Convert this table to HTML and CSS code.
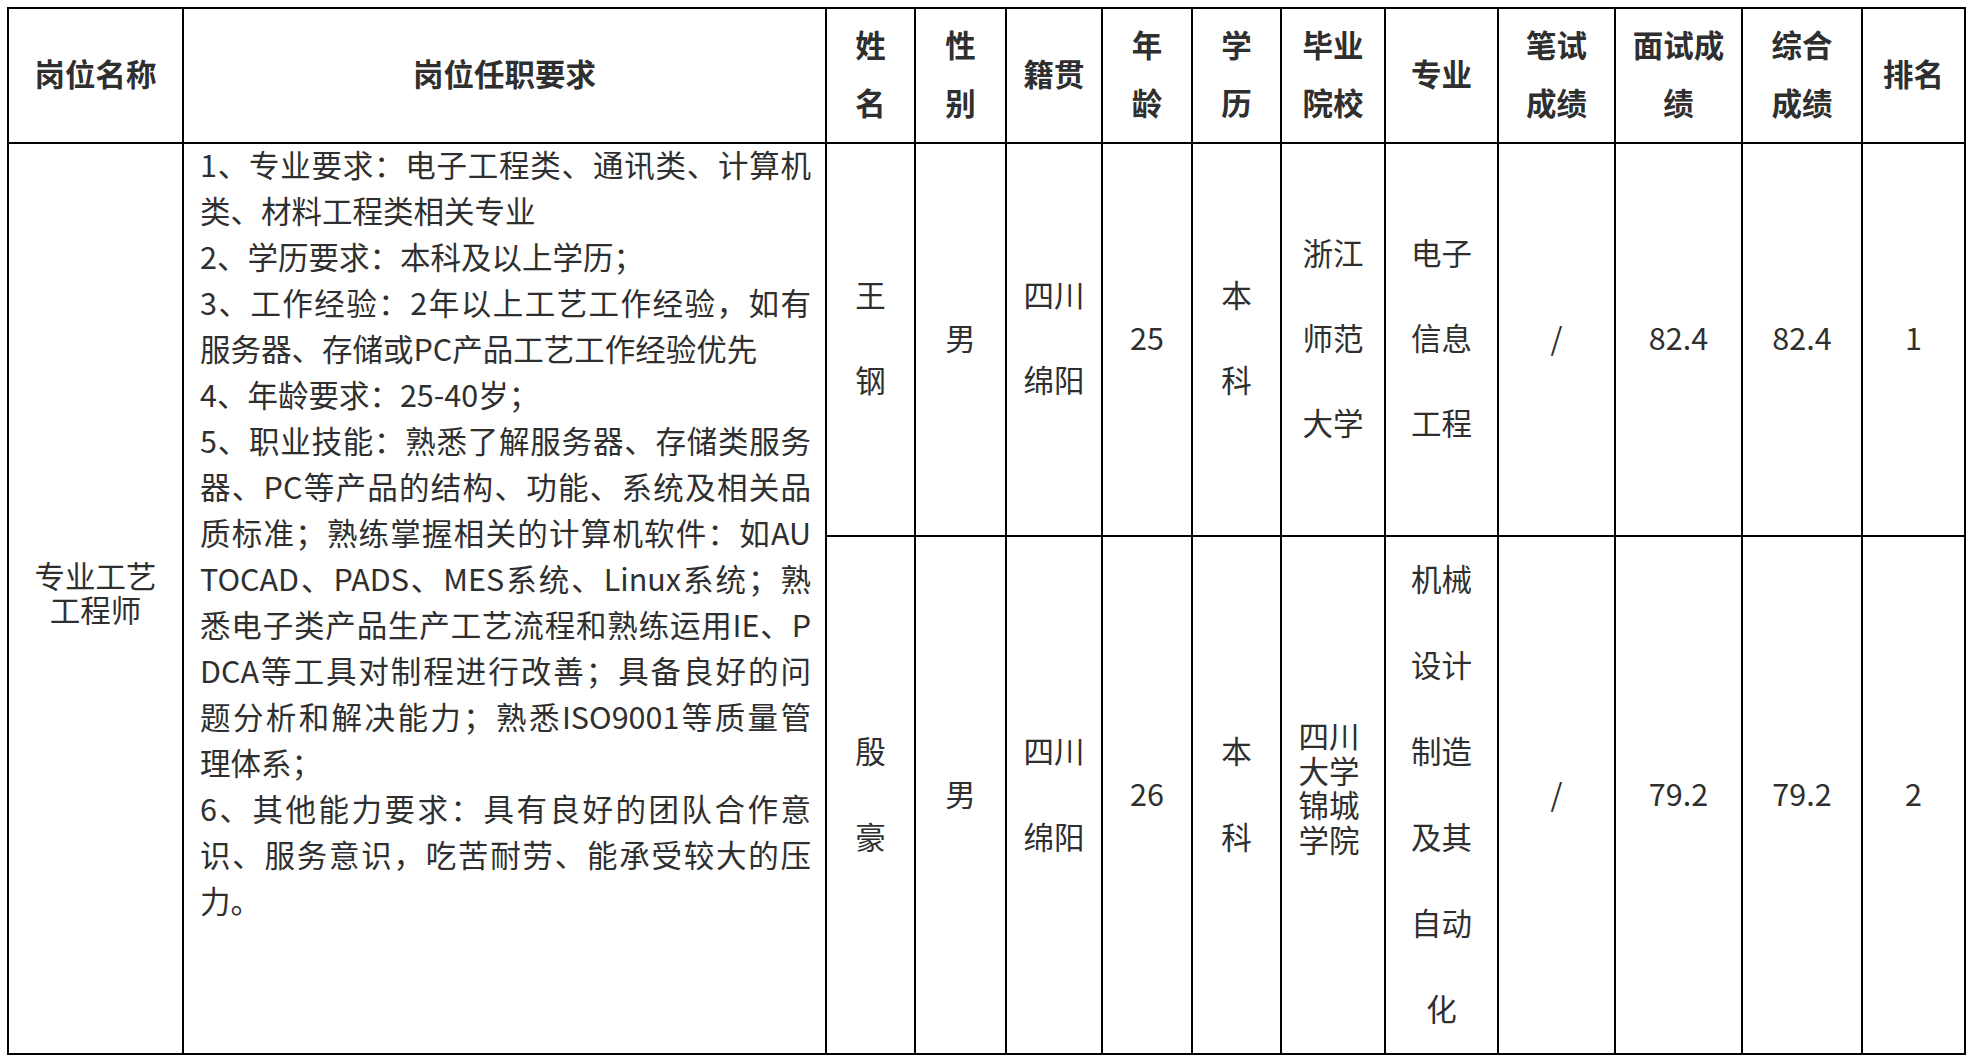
FILE: index.html
```html
<!DOCTYPE html>
<html lang="zh-CN">
<head>
<meta charset="utf-8">
<title>岗位面试成绩</title>
<link rel="stylesheet" href="styles.css">
</head>
<body>
<div class="sheet">
  <div class="cell th">岗位名称</div>
  <div class="cell th">岗位任职要求</div>
  <div class="cell th">姓<br>名</div>
  <div class="cell th">性<br>别</div>
  <div class="cell th">籍贯</div>
  <div class="cell th">年<br>龄</div>
  <div class="cell th">学<br>历</div>
  <div class="cell th">毕业<br>院校</div>
  <div class="cell th">专业</div>
  <div class="cell th">笔试<br>成绩</div>
  <div class="cell th">面试成<br>绩</div>
  <div class="cell th">综合<br>成绩</div>
  <div class="cell th">排名</div>

  <div class="cell span2 post">专业工艺<br>工程师</div>
  <div class="cell span2 req">
    <span class="ln j">1、专业要求：电子工程类、通讯类、计算机</span>
    <span class="ln">类、材料工程类相关专业</span>
    <span class="ln">2、学历要求：本科及以上学历；</span>
    <span class="ln j">3、工作经验：2年以上工艺工作经验，如有</span>
    <span class="ln">服务器、存储或PC产品工艺工作经验优先</span>
    <span class="ln">4、年龄要求：25-40岁；</span>
    <span class="ln j">5、职业技能：熟悉了解服务器、存储类服务</span>
    <span class="ln j">器、PC等产品的结构、功能、系统及相关品</span>
    <span class="ln j">质标准；熟练掌握相关的计算机软件：如AU</span>
    <span class="ln j">TOCAD、PADS、MES系统、Linux系统；熟</span>
    <span class="ln j">悉电子类产品生产工艺流程和熟练运用IE、P</span>
    <span class="ln j">DCA等工具对制程进行改善；具备良好的问</span>
    <span class="ln j">题分析和解决能力；熟悉ISO9001等质量管</span>
    <span class="ln">理体系；</span>
    <span class="ln j">6、其他能力要求：具有良好的团队合作意</span>
    <span class="ln j">识、服务意识，吃苦耐劳、能承受较大的压</span>
    <span class="ln">力。</span>
  </div>

  <div class="cell r1">王<br>钢</div>
  <div class="cell r1">男</div>
  <div class="cell r1">四川<br>绵阳</div>
  <div class="cell r1">25</div>
  <div class="cell r1">本<br>科</div>
  <div class="cell r1">浙江<br>师范<br>大学</div>
  <div class="cell r1">电子<br>信息<br>工程</div>
  <div class="cell r1">/</div>
  <div class="cell r1">82.4</div>
  <div class="cell r1">82.4</div>
  <div class="cell r1">1</div>

  <div class="cell r2">殷<br>豪</div>
  <div class="cell r2">男</div>
  <div class="cell r2">四川<br>绵阳</div>
  <div class="cell r2">26</div>
  <div class="cell r2">本<br>科</div>
  <div class="cell r2 tight">四川<br>大学<br>锦城<br>学院</div>
  <div class="cell r2">机械<br>设计<br>制造<br>及其<br>自动<br>化</div>
  <div class="cell r2">/</div>
  <div class="cell r2">79.2</div>
  <div class="cell r2">79.2</div>
  <div class="cell r2">2</div>
</div>
</body>
</html>
```

FILE: styles.css
```css
html, body {
  margin: 0;
  padding: 0;
  background: #ffffff;
}

body {
  padding: 7px;
  font-family: "Noto Sans CJK SC", "Noto Sans", sans-serif;
  font-size: 30.5px;
  color: #2f2f2f;
}

.sheet {
  display: grid;
  grid-template-columns: 175px 643px 89px 91px 96px 90px 89px 104px 113px 117px 127px 120px 103px;
  grid-template-rows: 135px 393px 518px;
  width: 1959px;
  border-left: 2px solid #000000;
  border-top: 2px solid #000000;
  box-sizing: border-box;
}

.cell {
  border-right: 2px solid #000000;
  border-bottom: 2px solid #000000;
  display: flex;
  align-items: center;
  justify-content: center;
  text-align: center;
  min-width: 0;
  overflow: hidden;
  padding-bottom: 5px;
}

.th {
  font-weight: 700;
  line-height: 58px;
}

.span2 {
  grid-row: span 2;
}

.post {
  line-height: 34px;
  padding-bottom: 14px;
}

.req {
  flex-direction: column;
  align-items: stretch;
  justify-content: flex-start;
  text-align: left;
  padding: 0 14px 0 16px;
  line-height: 46px;
}

.ln {
  display: block;
  white-space: nowrap;
}

.ln:first-child {
  line-height: 40px;
  margin-bottom: 3px;
}

.ln.j {
  text-align: justify;
  text-align-last: justify;
}

.r1 {
  line-height: 85px;
}

.r2 {
  line-height: 86px;
}

.r2.tight {
  line-height: 34.5px;
  padding: 0 8px 16px 0;
}
```
